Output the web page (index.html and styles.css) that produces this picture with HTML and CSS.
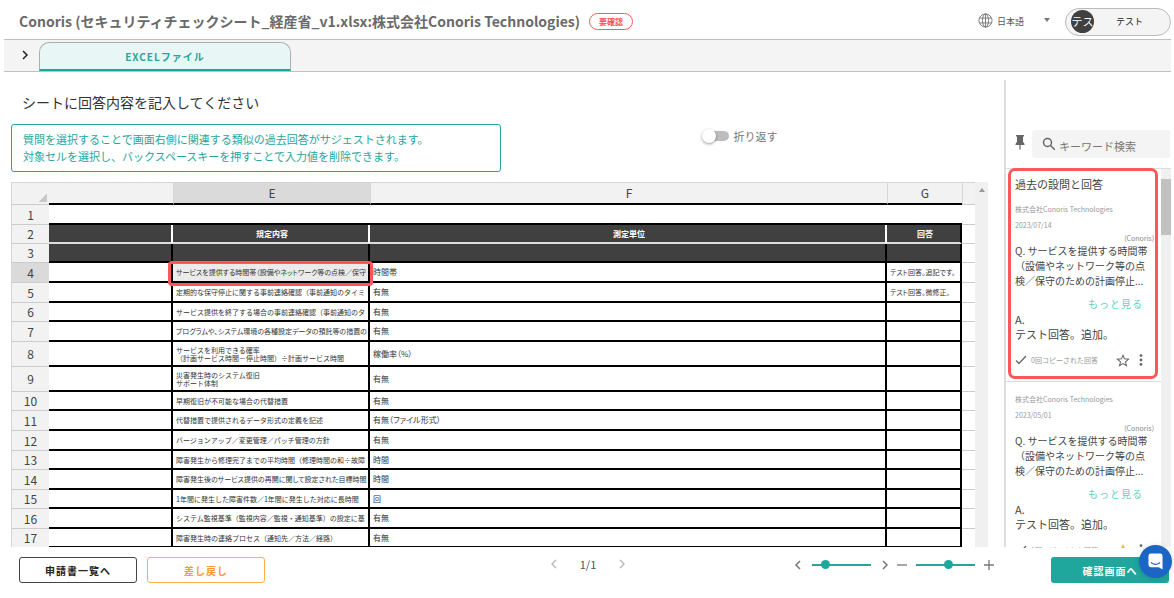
FILE: index.html
```html
<!DOCTYPE html>
<html lang="ja">
<head>
<meta charset="utf-8">
<title>Conoris</title>
<link rel="stylesheet" href="styles.css">
</head>
<body>
<div class="app">
  <header class="header">
    <h1 class="header-title">Conoris (セキュリティチェックシート_経産省_v1.xlsx:株式会社Conoris Technologies)</h1>
    <span class="badge">要確認</span>
    <div class="language">
      <svg class="globe" viewBox="0 0 16 16" aria-hidden="true"><circle cx="8" cy="8" r="7"/><ellipse cx="8" cy="8" rx="3.2" ry="7"/><path d="M1.7 5.4h12.6M1.7 10.6h12.6M8 1v14"/></svg>
      <select class="language-select" aria-label="言語"><option>日本語</option></select>
      <span class="caret"></span>
    </div>
    <button class="user" type="button"><span class="avatar">テス</span><span class="user-name">テスト</span></button>
  </header>

  <nav class="tabs">
    <button class="tabs-expand" type="button" aria-label="開く"><svg class="chevron" viewBox="0 0 8 10"><path d="M2 1l4 4-4 4"/></svg></button>
    <button class="tab" type="button">EXCELファイル</button>
  </nav>

  <main class="main">
    <section class="content">
      <h2 class="content-title">シートに回答内容を記入してください</h2>
      <div class="toolbar">
        <p class="notice">質問を選択することで画面右側に関連する類似の過去回答がサジェストされます。<br>対象セルを選択し、バックスペースキーを押すことで入力値を削除できます。</p>
        <div class="wrap-option">
          <label class="switch"><input class="switch-input" type="checkbox"><span class="switch-label">折り返す</span></label>
        </div>
      </div>
      <div class="sheet">
        <table class="grid">
          <colgroup><col class="col-number"><col class="col-d"><col class="col-e"><col><col class="col-g"><col class="col-rest"></colgroup>
          <thead>
            <tr class="letters"><th class="corner"></th><th></th><th class="picked">E</th><th>F</th><th>G</th><th class="rest"></th></tr>
          </thead>
          <tbody>
            <tr class="blank"><th>1</th><td></td><td></td><td></td><td></td><td class="rest"></td></tr>
            <tr class="dark titles slim"><th>2</th><td></td><td>規定内容</td><td>測定単位</td><td class="last">回答</td><td class="rest"></td></tr>
            <tr class="dark slim"><th>3</th><td></td><td></td><td></td><td></td><td class="rest"></td></tr>
            <tr><th class="picked">4</th><td></td><td class="selected"><div class="cell cell-kana">サービスを提供する時間帯（設備やネットワーク等の点検／保守</div><span class="mark mark-cell"></span></td><td>時間帯</td><td><div class="cell cell-kana">テスト回答。追記です。</div></td><td class="rest"></td></tr>
            <tr><th>5</th><td></td><td><div class="cell">定期的な保守停止に関する事前連絡確認（事前通知のタイミ</div></td><td>有無</td><td><div class="cell cell-kana">テスト回答。微修正。</div></td><td class="rest"></td></tr>
            <tr class="slim"><th>6</th><td></td><td><div class="cell">サービス提供を終了する場合の事前連絡確認（事前通知のタ</div></td><td>有無</td><td></td><td class="rest"></td></tr>
            <tr><th>7</th><td></td><td><div class="cell cell-kana">プログラムや、システム環境の各種設定データの預託等の措置の</div></td><td>有無</td><td></td><td class="rest"></td></tr>
            <tr class="tall"><th>8</th><td></td><td><div class="cell">サービスを利用できる確率<br>（計画サービス時間－停止時間）÷計画サービス時間</div></td><td>稼働率（%）</td><td></td><td class="rest"></td></tr>
            <tr class="tall"><th>9</th><td></td><td><div class="cell">災害発生時のシステム復旧<br>サポート体制</div></td><td>有無</td><td></td><td class="rest"></td></tr>
            <tr class="slim"><th>10</th><td></td><td><div class="cell">早期復旧が不可能な場合の代替措置</div></td><td>有無</td><td></td><td class="rest"></td></tr>
            <tr><th>11</th><td></td><td><div class="cell">代替措置で提供されるデータ形式の定義を記述</div></td><td>有無（ファイル形式）</td><td></td><td class="rest"></td></tr>
            <tr><th>12</th><td></td><td><div class="cell">バージョンアップ／変更管理／パッチ管理の方針</div></td><td>有無</td><td></td><td class="rest"></td></tr>
            <tr class="slim"><th>13</th><td></td><td><div class="cell">障害発生から修理完了までの平均時間（修理時間の和÷故障</div></td><td>時間</td><td></td><td class="rest"></td></tr>
            <tr><th>14</th><td></td><td><div class="cell cell-kana">障害発生後のサービス提供の再開に関して設定された目標時間</div></td><td>時間</td><td></td><td class="rest"></td></tr>
            <tr class="slim"><th>15</th><td></td><td><div class="cell">1年間に発生した障害件数／1年間に発生した対応に長時間</div></td><td>回</td><td></td><td class="rest"></td></tr>
            <tr><th>16</th><td></td><td><div class="cell">システム監視基準（監視内容／監視・通知基準）の設定に基</div></td><td>有無</td><td></td><td class="rest"></td></tr>
            <tr class="slim"><th>17</th><td></td><td><div class="cell">障害発生時の連絡プロセス（通知先／方法／経路）</div></td><td>有無</td><td></td><td class="rest"></td></tr>
          </tbody>
        </table>
        <div class="sheet-scroll"><span class="scroll-up"></span></div>
      </div>
    </section>

    <aside class="side">
      <div class="search-row">
        <svg class="pin" viewBox="0 0 10 15" aria-hidden="true"><path d="M1 0h8v1.500H8V6.500L9.500 9v1H5.600v4.500h-1.200V10H.5V9L2 6.500V1.500H1z"/></svg>
        <label class="search">
          <svg class="search-icon" viewBox="0 0 14 14" aria-hidden="true"><circle cx="5.500" cy="5.500" r="4"/><path d="M8.500 8.500l4.300 4.300"/></svg>
          <input class="search-input" type="text" placeholder="キーワード検索" aria-label="キーワード検索">
        </label>
      </div>
      <div class="history">
        <div class="history-list">
          <section class="featured">
            <h3 class="history-title">過去の設問と回答</h3>
            <article class="card">
              <div class="meta">株式会社Conoris Technologies</div>
              <div class="meta">2023/07/14</div>
              <div class="author">(Conoris)</div>
              <p class="question">Q. サービスを提供する時間帯（設備やネットワーク等の点検／保守のための計画停止...</p>
              <button class="more" type="button">もっと見る</button>
              <p class="answer">A.<br>テスト回答。追加。</p>
              <div class="card-foot">
                <svg class="check" viewBox="0 0 12 10" aria-hidden="true"><path d="M1 5.500l3 3L11 1"/></svg>
                <span class="copied">0回コピーされた回答</span>
                <button class="icon-button" type="button" aria-label="お気に入り"><svg class="star" viewBox="0 0 24 24"><path d="M12 3l2.700 6.200 6.800.6-5.200 4.500 1.600 6.600-5.900-3.500-5.900 3.500 1.600-6.600L2.500 9.800l6.800-.6z"/></svg></button>
                <button class="icon-button" type="button" aria-label="メニュー"><svg class="dots" viewBox="0 0 4 12"><circle cx="2" cy="1.600" r="1.400"/><circle cx="2" cy="6" r="1.400"/><circle cx="2" cy="10.400" r="1.400"/></svg></button>
              </div>
            </article>
            <span class="mark mark-card"></span>
          </section>
          <article class="card">
            <div class="meta">株式会社Conoris Technologies</div>
            <div class="meta">2023/05/01</div>
            <div class="author">(Conoris)</div>
            <p class="question">Q. サービスを提供する時間帯（設備やネットワーク等の点検／保守のための計画停止...</p>
            <button class="more" type="button">もっと見る</button>
            <p class="answer">A.<br>テスト回答。追加。</p>
            <div class="card-foot">
              <svg class="check" viewBox="0 0 12 10" aria-hidden="true"><path d="M1 5.500l3 3L11 1"/></svg>
              <span class="copied">1回コピーされた回答</span>
              <button class="icon-button" type="button" aria-label="お気に入り"><svg class="star star-on" viewBox="0 0 24 24"><path d="M12 3l2.700 6.200 6.800.6-5.200 4.500 1.600 6.600-5.900-3.500-5.900 3.500 1.600-6.600L2.500 9.800l6.800-.6z"/></svg></button>
              <button class="icon-button" type="button" aria-label="メニュー"><svg class="dots" viewBox="0 0 4 12"><circle cx="2" cy="1.600" r="1.400"/><circle cx="2" cy="6" r="1.400"/><circle cx="2" cy="10.400" r="1.400"/></svg></button>
            </div>
          </article>
        </div>
        <div class="history-scroll"><div class="history-thumb"></div></div>
      </div>
    </aside>
  </main>

  <footer class="footer">
    <div class="footer-left">
      <button class="button" type="button">申請書一覧へ</button>
      <button class="button button-return" type="button">差し戻し</button>
    </div>
    <div class="pager">
      <button class="step step-off" type="button" aria-label="前へ"><svg class="chevron" viewBox="0 0 8 10"><path d="M6 1L2 5l4 4"/></svg></button>
      <span class="pager-text">1/1</span>
      <button class="step step-off" type="button" aria-label="次へ"><svg class="chevron" viewBox="0 0 8 10"><path d="M2 1l4 4-4 4"/></svg></button>
    </div>
    <div class="footer-right">
      <div class="sliders">
        <button class="step" type="button" aria-label="左へ"><svg class="chevron" viewBox="0 0 8 10"><path d="M6 1L2 5l4 4"/></svg></button>
        <input class="slider" type="range" min="0" max="100" value="17" aria-label="横位置">
        <button class="step" type="button" aria-label="右へ"><svg class="chevron" viewBox="0 0 8 10"><path d="M2 1l4 4-4 4"/></svg></button>
        <button class="step" type="button" aria-label="縮小"><svg class="sign" viewBox="0 0 12 12"><path d="M1 6h10"/></svg></button>
        <input class="slider" type="range" min="0" max="100" value="55" aria-label="倍率">
        <button class="step" type="button" aria-label="拡大"><svg class="sign" viewBox="0 0 12 12"><path d="M1 6h10M6 1v10"/></svg></button>
      </div>
      <button class="button button-confirm" type="button">確認画面へ</button>
    </div>
  </footer>
  <button class="chat" type="button" aria-label="チャット"><svg class="chat-icon" viewBox="0 0 16 18"><path d="M3 .5h10A2.500 2.500 0 0 1 15.500 3v14.500l-4-2.500H3A2.500 2.500 0 0 1 .5 12.500V3A2.500 2.500 0 0 1 3 .5z" fill="#fff"/><path d="M3.500 10.300c2.800 2.200 6.200 2.200 9 0" fill="none" stroke="#1b66c4" stroke-width="1.200" stroke-linecap="round"/></svg></button>
</div>
</body>
</html>
```

FILE: styles.css
```css
* { box-sizing: border-box; }

body {
  margin: 0;
  background: #fff;
  color: #333;
  font-family: "Noto Sans CJK JP", sans-serif;
  font-size: 11px;
}

h1, h2, h3, p { margin: 0; }

button, input, select { font: inherit; color: inherit; }

button {
  display: flex;
  align-items: center;
  justify-content: center;
  padding: 0;
  border: 0;
  background: none;
}

svg { display: block; fill: none; stroke: currentColor; }

.app {
  position: relative;
  display: flex;
  flex-direction: column;
  height: 100vh;
  padding: 0 3px 0 4px;
  overflow: hidden;
}

/* Header */
.header {
  display: flex;
  align-items: center;
  height: 39px;
  padding: 4px 0 0 15px;
}
.header-title {
  padding-bottom: 2px;
  color: #6a6a6a;
  font-size: 14px;
  line-height: 20px;
  font-weight: 700;
  white-space: nowrap;
}
.badge {
  margin-left: 9px;
  padding: 0 9px;
  border: 1px solid #ff5a5a;
  border-radius: 9px;
  color: #ff4c4c;
  font-size: 8px;
  font-weight: 700;
  line-height: 15px;
}
.language {
  display: flex;
  align-items: center;
  gap: 4px;
  margin-left: auto;
  padding-bottom: 3px;
  color: #555;
}
.globe { width: 15px; height: 15px; color: #777; }
.language-select {
  width: 43px;
  padding: 2px 0 0;
  border: 0;
  background: none;
  font-size: 9px;
  appearance: none;
}
.caret, .scroll-up {
  border: 3px solid transparent;
  border-top: 4px solid #777;
  border-bottom: 0;
}
.user {
  gap: 22px;
  width: 106px;
  height: 28px;
  margin-left: 15px;
  padding-left: 5px;
  justify-content: flex-start;
  border: 1px solid #bbb;
  border-radius: 14px;
  background: #f4f4f4;
}
.avatar {
  width: 23px;
  height: 23px;
  border-radius: 50%;
  background: #404040;
  color: #fff;
  font-size: 11px;
  line-height: 23px;
}
.user-name { color: #222; font-size: 9px; }

/* Tabs */
.tabs {
  display: flex;
  align-items: flex-end;
  height: 33px;
  border-top: 1px solid #bfc1c1;
  border-bottom: 1px solid #bfc1c1;
  background: #f4f4f4;
}
.tabs-expand { width: 35px; height: 32px; padding-left: 6px; color: #222; }
.chevron { width: 8px; height: 10px; stroke-width: 1.5; }
.tab {
  width: 252px;
  height: 29px;
  border: 1px solid #aab0b0;
  border-bottom: 2px solid #1fa59c;
  border-radius: 10px 10px 0 0;
  background: #e8f6f6;
  color: #26a69a;
  font-size: 10px;
  font-weight: 700;
  letter-spacing: 1px;
}

/* Main area */
.main { display: flex; flex: 1; min-height: 0; }
.content {
  display: flex;
  flex: 1;
  flex-direction: column;
  min-width: 0;
  padding: 20px 16px 0 7px;
}
.content-title {
  padding-left: 11px;
  font-size: 14px;
  font-weight: 400;
  line-height: 20px;
}
.toolbar { display: flex; margin: 12px 0 10px; }
.notice {
  width: 490px;
  padding: 6px 11px;
  border: 1px solid #26a69a;
  border-radius: 3px;
  color: #26a69a;
  line-height: 17px;
}
.wrap-option {
  display: flex;
  flex: 1;
  align-items: flex-start;
  justify-content: center;
  padding: 4px 10px 0 0;
}
.switch { display: flex; align-items: center; gap: 5px; color: #777; line-height: 16px; }
.switch-input {
  position: relative;
  width: 27px;
  height: 14px;
  margin: 0;
  appearance: none;
}
.switch-input::before {
  position: absolute;
  inset: 2px 0 2px 5px;
  border-radius: 5px;
  background: #bdbdbd;
  content: "";
}
.switch-input::after {
  position: absolute;
  top: 0;
  left: 0;
  width: 14px;
  height: 14px;
  border-radius: 50%;
  background: #fff;
  box-shadow: 0 1px 3px rgba(0, 0, 0, .4);
  content: "";
}

/* Spreadsheet */
.sheet { display: flex; flex: 1; min-height: 0; overflow: hidden; }
.grid {
  flex: 1;
  align-self: flex-start;
  width: 100%;
  table-layout: fixed;
  border-collapse: separate;
  border-spacing: 0;
}
.col-number { width: 38px; }
.col-d { width: 124px; }
.col-e { width: 197px; }
.col-g { width: 75px; }
.col-rest { width: 13px; }
.grid tr { height: 20px; }
.grid .slim { height: 19px; }
.grid .tall { height: 25px; }
.grid .letters { height: 23px; }
.grid th {
  padding: 0;
  border-bottom: 1px solid #ccc;
  border-left: 1px solid #d6d6d6;
  background: #f2f2f2;
  color: #444;
  font-size: 12px;
  font-weight: 400;
  line-height: 16px;
}
.letters th {
  border-top: 1px solid #d6d6d6;
}
.grid .letters th { border-bottom: 2px solid #000; }
.grid .letters .corner {
  border-bottom: 1px solid #ccc;
  background: linear-gradient(135deg, transparent 50%, #c8c8c8 50%) right 2px bottom 2px / 9px 9px no-repeat #f2f2f2;
}
.grid .letters .corner + th { border-left: 0; }
.grid .picked { background: #dadada; }
.grid td {
  padding: 0 0 0 3px;
  border-right: 2px solid #000;
  border-bottom: 2px solid #000;
  font-size: 8px;
  line-height: 8px;
  white-space: nowrap;
  font-feature-settings: "palt";
}
.grid .blank td { border-right: 0; }
.grid .dark td { background: #404040; }
.grid .titles td {
  border-right-color: #fff;
  border-bottom-color: #ddd;
  color: #fff;
  font-weight: 700;
  text-align: center;
}
.grid .titles .last { border-right-color: #000; }
.grid .rest,
.grid .dark .rest {
  border-right: 0;
  border-bottom: 1px solid #ccc;
  background: #fff;
}
.grid .letters .rest { border-bottom: 1px solid #ccc; background: #f2f2f2; }
.grid .selected { position: relative; background: #ebebeb; }
.cell {
  overflow: hidden;
  font-size: 7px;
  font-feature-settings: normal;
}
.cell-kana { font-feature-settings: "palt"; }
.sheet-scroll {
  display: flex;
  justify-content: center;
  width: 13px;
  padding-top: 6px;
  background: #f0f0f0;
}
.scroll-up {
  height: 4px;
  border-top: 0;
  border-bottom: 4px solid #999;
}

/* Red emphasis frames */
.mark {
  position: absolute;
  z-index: 1;
  border: 3px solid #ff5757;
  border-radius: 4px;
  pointer-events: none;
}
.mark-cell { inset: -2px -5px -5px -5px; }
.mark-card { inset: -1px 3px 3px 2px; border-radius: 7px; }

/* Answer history */
.side {
  display: flex;
  flex-direction: column;
  width: 167px;
  margin-top: 8px;
  border-left: 2px solid #ddd;
}
.search-row {
  display: flex;
  align-items: center;
  gap: 7px;
  padding: 50px 1px 10px 9px;
  border-bottom: 1px solid #ddd;
}
.pin { width: 10px; height: 15px; margin-bottom: 4px; fill: #666; stroke: none; }
.search {
  display: flex;
  flex: 1;
  align-items: center;
  gap: 3px;
  min-width: 0;
  height: 28px;
  padding-left: 10px;
  border-radius: 3px;
  background: #f4f4f4;
}
.search-icon { width: 14px; height: 14px; color: #666; stroke-width: 1.5; }
.search-input {
  flex: 1;
  min-width: 0;
  padding: 3px 0 0;
  border: 0;
  background: none;
  line-height: 16px;
}
.search-input::placeholder { color: #777; }
.history { display: flex; flex: 1; min-height: 0; }
.history-list { flex: 1; min-width: 0; overflow: clip; overflow-clip-margin: 1px; }
.history-scroll { width: 10px; padding-top: 10px; background: #f0f0f0; }
.history-thumb { height: 56px; background: #c1c1c1; }
.featured { position: relative; }
.history-title {
  padding: 7px 9px 0;
  color: #444;
  font-size: 11px;
  font-weight: 400;
  line-height: 16px;
}
.card {
  padding: 9px 7px 11px 9px;
  border-bottom: 1px solid #ddd;
  color: #444;
}
.meta { color: #999; font-size: 7px; line-height: 16px; }
.author { color: #888; font-size: 7px; line-height: 10px; text-align: right; }
.question { padding-right: 4px; font-size: 10px; line-height: 15px; }
.more {
  margin: 8px 11px 0 auto;
  color: #5fd3bd;
  font-size: 10px;
  line-height: 16px;
  letter-spacing: 1px;
}
.answer { font-size: 11px; line-height: 15px; }
.card-foot {
  display: flex;
  align-items: center;
  gap: 4px;
  height: 20px;
  margin-top: 8px;
  padding-right: 6px;
  color: #666;
}
.check { width: 12px; height: 10px; stroke-width: 1.3; }
.copied { flex: 1; color: #999; font-size: 7px; }
.icon-button { width: 14px; }
.star { width: 15px; height: 15px; stroke-width: 1.8; }
.star-on { color: #fbb81c; fill: #fbb81c; }
.dots { width: 4px; height: 12px; fill: #666; stroke: none; }

/* Footer */
.footer {
  display: grid;
  grid-template-columns: 1fr auto 1fr;
  align-items: start;
  height: 51px;
  padding: 10px 2px 0 15px;
}
.footer-left { display: flex; gap: 10px; }
.button {
  width: 118px;
  height: 26px;
  border: 1px solid #444;
  border-radius: 3px;
  color: #222;
  font-size: 10px;
  font-weight: 700;
  letter-spacing: 1px;
}
.button-return { border-color: #ffb04d; color: #ff9933; }
.button-confirm { border: 0; background: #1fa69d; color: #fff; }
.pager {
  display: flex;
  align-items: center;
  gap: 20px;
  height: 14px;
  margin-right: 12px;
}
.pager-text { color: #555; font-size: 11px; line-height: 14px; }
.step { width: 12px; height: 14px; color: #777; }
.step-off { color: #bbb; }
.sign { width: 12px; height: 12px; stroke-width: 1.3; }
.footer-right { display: flex; justify-content: flex-end; gap: 56px; }
.sliders { display: flex; align-items: center; gap: 8px; height: 15px; }
.sliders .step + .step { margin-left: -3px; }
.slider {
  width: 59px;
  height: 10px;
  margin: 0;
  background: linear-gradient(#26a69a, #26a69a) center / 100% 2px no-repeat;
  appearance: none;
}
.slider::-webkit-slider-thumb {
  width: 9px;
  height: 9px;
  border-radius: 50%;
  background: #1fa69d;
  appearance: none;
}

.chat {
  position: absolute;
  right: 2px;
  bottom: 20px;
  width: 33px;
  height: 33px;
  border-radius: 50%;
  background: #1b66c4;
  box-shadow: 0 1px 6px rgba(0, 0, 0, .15);
}
.chat-icon { width: 15px; height: 17px; stroke: none; }
```
